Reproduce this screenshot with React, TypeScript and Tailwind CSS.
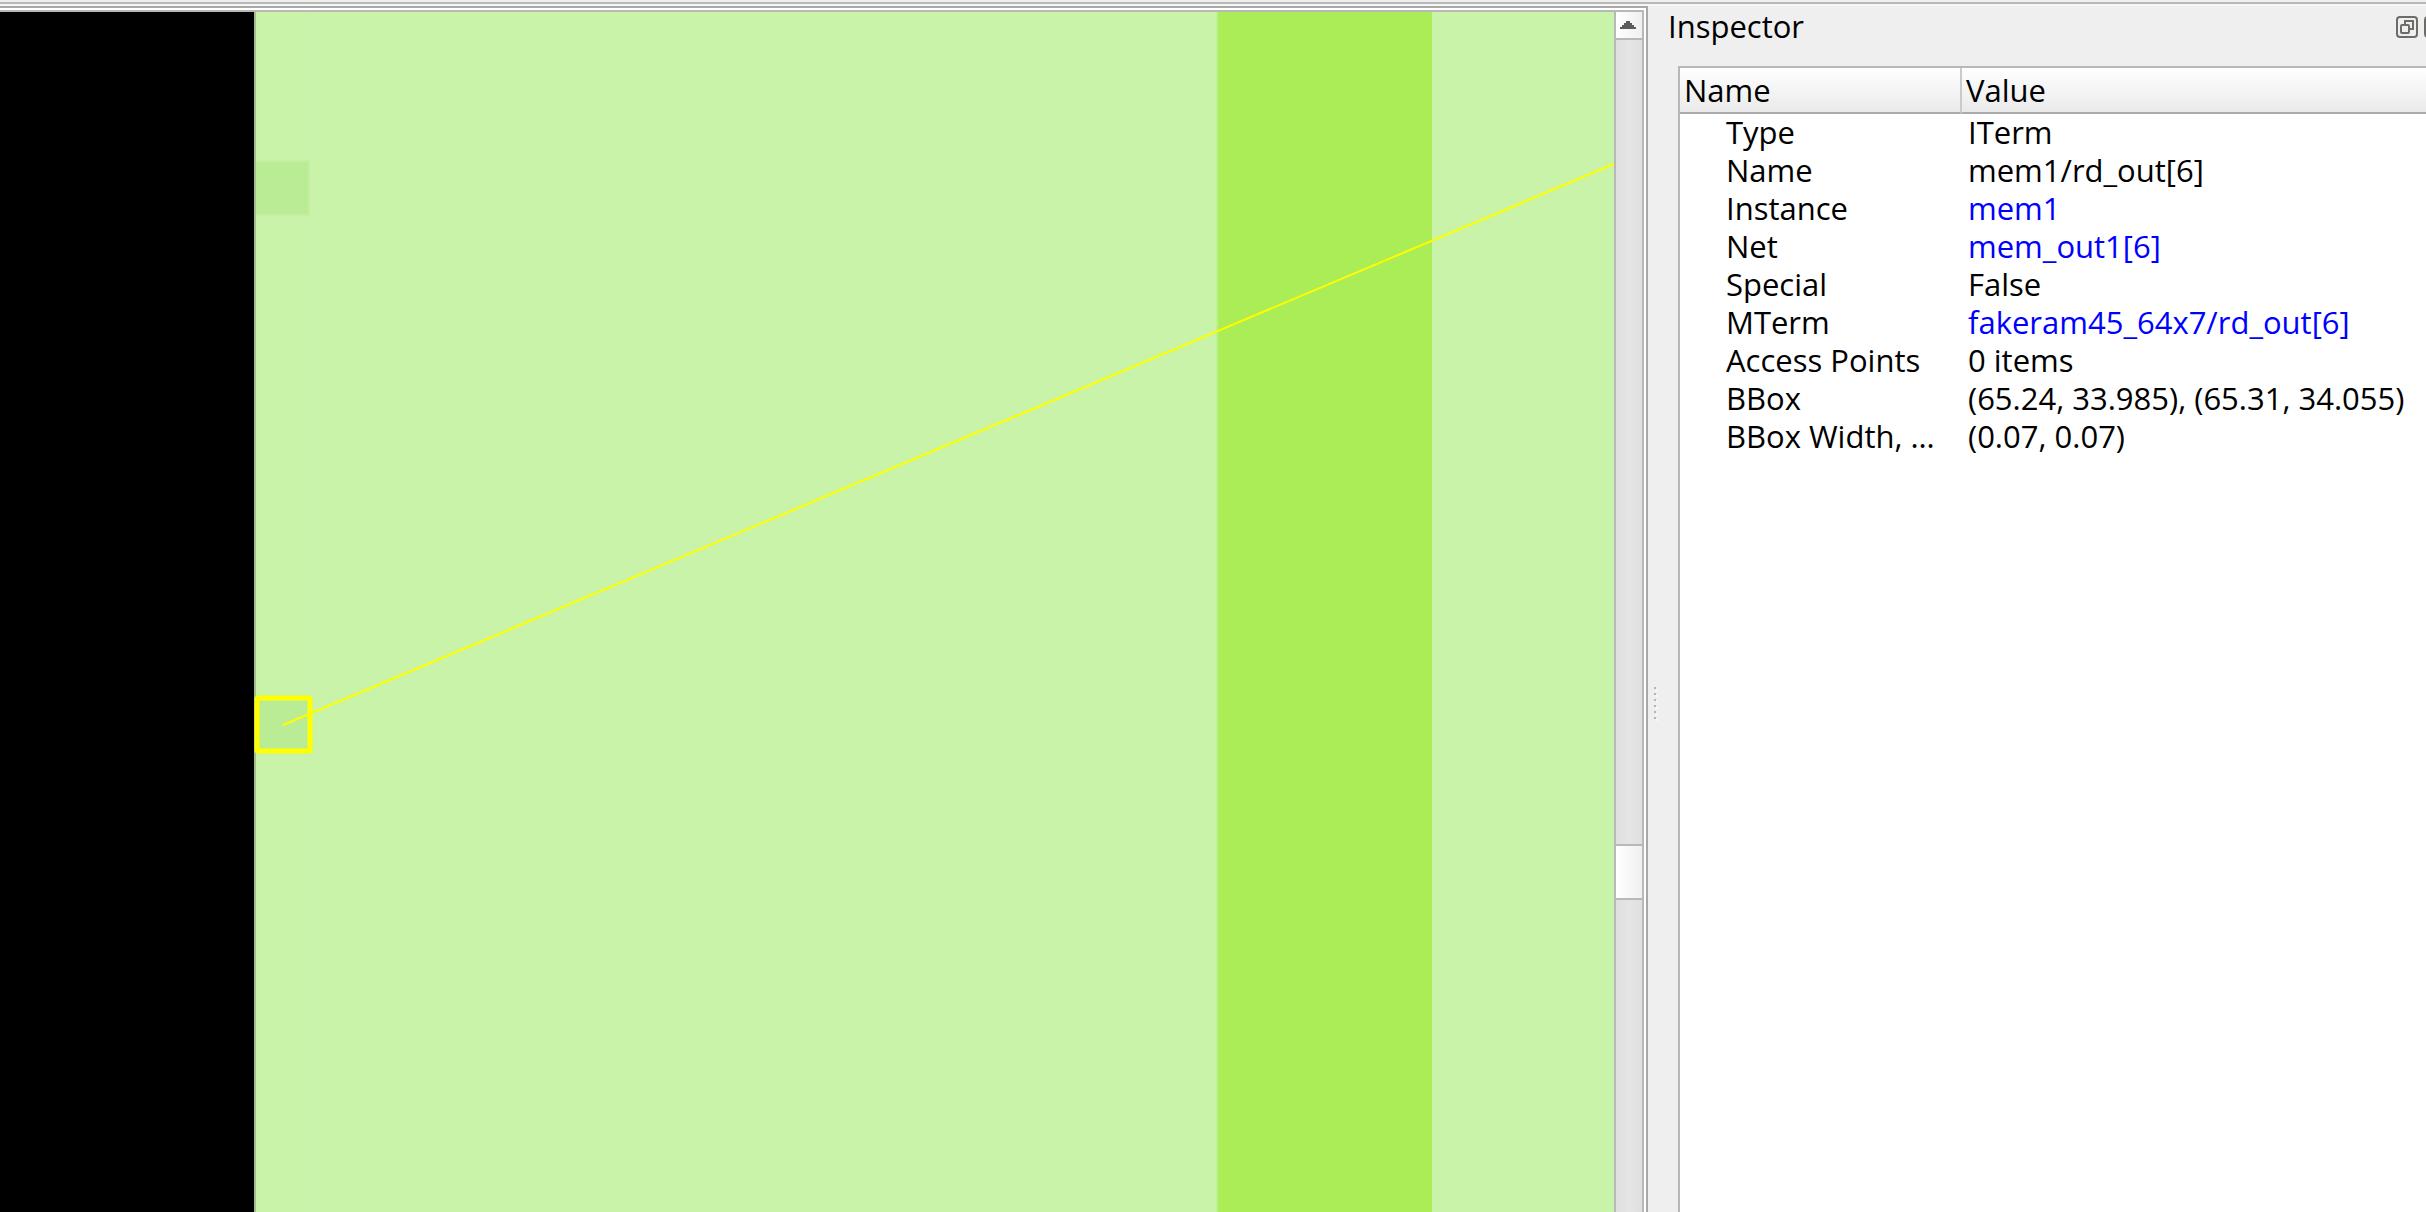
import React from "react";

type Property = { name: string; value: string; link?: boolean };

const properties: Property[] = [
  { name: "Type", value: "ITerm" },
  { name: "Name", value: "mem1/rd_out[6]" },
  { name: "Instance", value: "mem1", link: true },
  { name: "Net", value: "mem_out1[6]", link: true },
  { name: "Special", value: "False" },
  { name: "MTerm", value: "fakeram45_64x7/rd_out[6]", link: true },
  { name: "Access Points", value: "0 items" },
  { name: "BBox", value: "(65.24, 33.985), (65.31, 34.055)" },
  { name: "BBox Width, …", value: "(0.07, 0.07)" },
];

function LayoutDrawing() {
  return (
    <svg
      className="absolute inset-0 h-full w-full"
      viewBox="0 0 1614 1200"
      preserveAspectRatio="xMinYMin slice"
      role="img"
      aria-label="Chip layout"
    >
      <rect width="1614" height="1200" fill="#000000" />
      <rect x="254" width="1360" height="1200" fill="#a2bf8b" />
      <rect x="256" width="1358" height="1200" fill="#c9f3a8" />
      <rect x="308" width="2" height="1200" fill="#cbf0ab" />
      <rect x="1216" width="218" height="1200" fill="#bdf08e" />
      <rect x="1218" width="214" height="1200" fill="#aaed56" />
      <rect x="1432" width="2" height="1200" fill="#c9f3a8" />
      <rect x="256" y="148" width="54" height="56" fill="#c5eea2" />
      <rect x="256" y="150" width="52" height="52" fill="#b9ec94" />
      <rect x="257" y="686" width="53" height="53" fill="#b9ec94" />
      <rect x="257" y="686" width="53" height="53" rx="1" fill="none" stroke="#ffff00" strokeWidth="5" />
      <line x1="283" y1="713" x2="1614" y2="152" stroke="#ffff00" strokeWidth="2" />
    </svg>
  );
}

function ScrollBar() {
  return (
    <div className="flex w-[30px] shrink-0 flex-col border-x-2 border-[#b8b8b8] bg-gradient-to-r from-[#dfdfdf] via-[#e5e5e5] to-[#dfdfdf]">
      <button
        type="button"
        aria-label="Scroll up"
        className="flex h-7 shrink-0 items-center justify-center border-b-2 border-[#b8b8b8] bg-gradient-to-r from-white to-[#f0f0f0] pr-0.5"
      >
        <svg width="16" height="8" viewBox="0 0 16 8" shapeRendering="crispEdges">
          <path d="M6 0h4v2h2v2h2v2h2v2H0V6h2V4h2V2h2z" fill="#5c5c5c" />
        </svg>
      </button>
      <div className="grow-[804]" />
      <div
        role="scrollbar"
        aria-label="Vertical position"
        aria-controls="layout-view"
        aria-orientation="vertical"
        aria-valuenow={72}
        className="h-14 shrink-0 border-y-2 border-[#b8b8b8] bg-gradient-to-r from-white to-[#f0f0f0]"
      />
      <div className="grow-[312]" />
    </div>
  );
}

function Viewer() {
  return (
    <main className="flex border-t-2 border-r-2 border-[#a8a8a8] bg-white pt-0.5 pr-0.5">
      <div className="flex flex-1 border-t-2 border-[#b8b8b8]">
        <div id="layout-view" className="relative flex-1 overflow-hidden">
          <LayoutDrawing />
        </div>
        <ScrollBar />
      </div>
    </main>
  );
}

function SplitterGrip() {
  return (
    <div className="flex w-[30px] shrink-0 flex-col pl-1.5">
      <div className="grow-[680]" />
      <div className="flex flex-col gap-1">
        {[0, 1, 2, 3, 4, 5].map((dot) => (
          <span key={dot} className="h-0.5 w-0.5 bg-[#b4b4b4] shadow-[2px_2px_0_#f8f8f8]" />
        ))}
      </div>
      <div className="grow-[492]" />
    </div>
  );
}

function FloatIcon() {
  return (
    <svg width="22" height="22" viewBox="0 0 22 22" fill="none" stroke="#6e6c68" strokeWidth="2">
      <rect x="1" y="1" width="20" height="20" rx="3" />
      <rect x="5" y="9" width="8" height="8" rx="1" />
      <path d="M9 9V5h8v8h-4" />
    </svg>
  );
}

function CloseIcon() {
  return (
    <svg width="22" height="22" viewBox="0 0 22 22" fill="none" stroke="#6e6c68" strokeWidth="2">
      <rect x="1" y="1" width="20" height="20" rx="3" />
      <path d="M6 6l10 10M16 6L6 16" />
    </svg>
  );
}

function Inspector() {
  return (
    <aside className="flex min-w-0 overflow-hidden">
      <SplitterGrip />
      <div className="flex min-w-0 flex-1 flex-col">
        <header className="-ml-2.5 flex h-[60px] items-start justify-between">
          <h2 className="leading-10">Inspector</h2>
          <div className="-mr-5 flex shrink-0 gap-1.5 pt-2.5">
            <button type="button" aria-label="Float panel">
              <FloatIcon />
            </button>
            <button type="button" aria-label="Close panel">
              <CloseIcon />
            </button>
          </div>
        </header>
        <div className="flex-1 border-t-2 border-l-2 border-[#b8b8b8] bg-white">
          <table className="w-full table-fixed border-separate border-spacing-0 text-left whitespace-nowrap">
            <thead>
              <tr className="h-[46px] bg-gradient-to-b from-white to-[#e9e9e9]">
                <th className="w-[282px] border-r-2 border-b-2 border-r-[#cacaca] border-b-[#ababab] p-0 pl-1 font-normal">
                  Name
                </th>
                <th className="border-b-2 border-[#ababab] p-0 pl-1 font-normal">Value</th>
              </tr>
            </thead>
            <tbody className="leading-9">
              {properties.map((p) => (
                <tr key={p.name} className="h-[38px]">
                  <td className="p-0 pb-0.5 pl-[46px]">{p.name}</td>
                  <td className="p-0 pb-0.5 pl-1.5">
                    {p.link ? (
                      <a href="#" className="text-[#0000ff]">
                        {p.value}
                      </a>
                    ) : (
                      p.value
                    )}
                  </td>
                </tr>
              ))}
            </tbody>
          </table>
        </div>
      </div>
    </aside>
  );
}

export default function App() {
  return (
    <div className="flex h-screen flex-col overflow-hidden bg-[#efefef] pt-0.5 font-['Open_Sans',sans-serif] text-[31px] leading-[38px] text-black">
      <div className="h-1 shrink-0 border-t-2 border-[#b8b8b8] bg-[#f6f6f6]" />
      <div className="grid min-h-0 flex-1 grid-cols-[minmax(0,1648fr)_minmax(0,778fr)]">
        <Viewer />
        <Inspector />
      </div>
    </div>
  );
}
